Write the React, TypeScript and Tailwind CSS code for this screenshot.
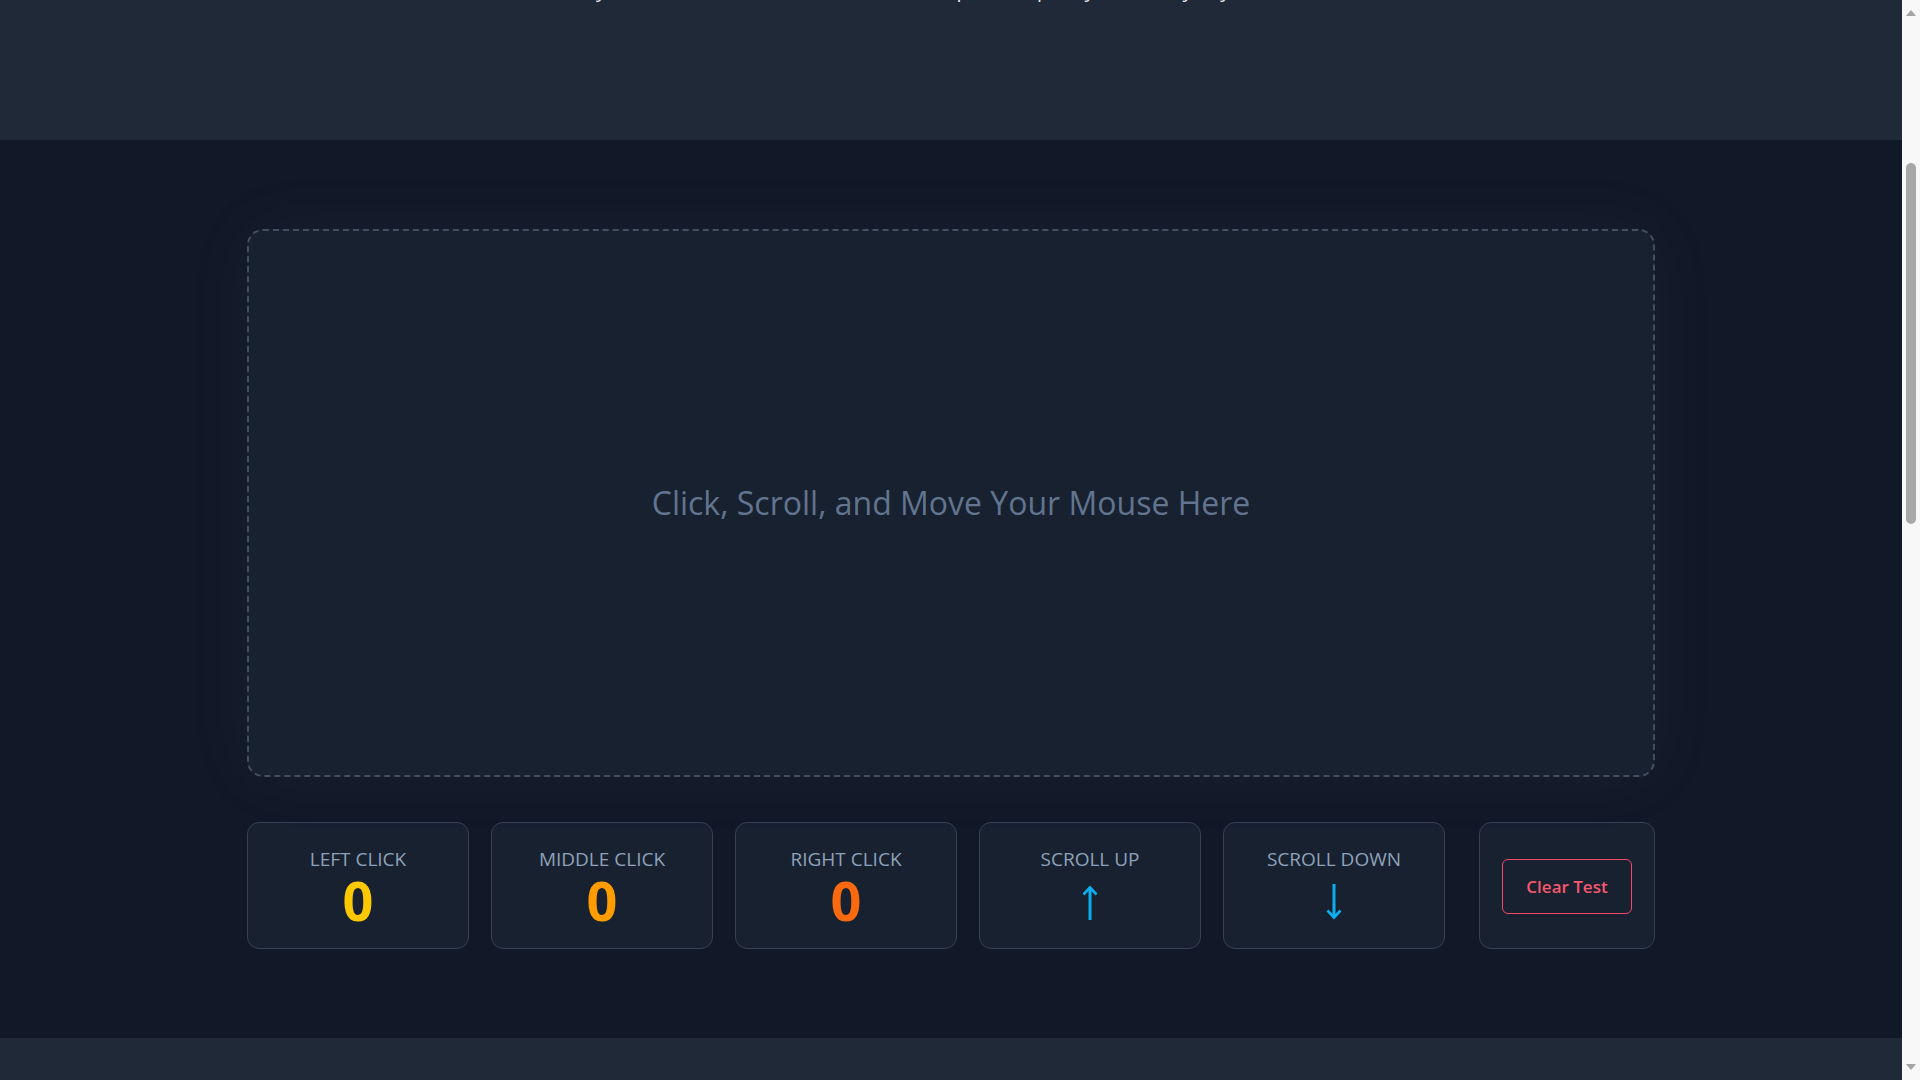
import React from "react";

function ArrowUp() {
  return (
    <svg width="16" height="35" viewBox="0 0 16 35" fill="none">
      <path d="M8 2.5 V35" stroke="#0aaff0" strokeWidth="3" />
      <path d="M1.5 9.5 L8 2.5 L14.5 9.5" stroke="#0aaff0" strokeWidth="2.6" />
    </svg>
  );
}

function ArrowDown() {
  return (
    <svg width="16" height="36" viewBox="0 0 16 36" fill="none">
      <path d="M8 0 V33.5" stroke="#0aaff0" strokeWidth="3" />
      <path d="M1.5 26.5 L8 33.5 L14.5 26.5" stroke="#0aaff0" strokeWidth="2.6" />
    </svg>
  );
}

function Stat({ label, children }: { label: string; children: React.ReactNode }) {
  return (
    <div className="flex h-[127px] w-[222px] shrink-0 flex-col items-center rounded-xl border border-gray-700 bg-gray-800/50 pt-[22px]">
      <div className="text-[19px] font-medium leading-[28px] text-slate-400">{label}</div>
      <div className="flex h-[54px] items-start justify-center">{children}</div>
    </div>
  );
}

function Num({ color }: { color: string }) {
  return <span className={`text-[54px] font-bold leading-[54px] ${color}`}>0</span>;
}

export default function App() {
  return (
    <div className="flex h-[1080px] w-[1920px] overflow-hidden bg-[#111827] font-['Open_Sans','Noto_Sans',sans-serif]">
      <div className="flex w-[1902px] shrink-0 flex-col">
        <header className="h-[140px] shrink-0 overflow-hidden bg-[#1f2937]">
          <p className="mt-[-24px] text-center text-[20px] leading-[28px] text-gray-200">
            Test your mouse buttons, scroll wheel, and pointer quickly and easily in your browser.
          </p>
        </header>
        <section className="h-[898px] shrink-0 pt-[89px]">
          <div className="mx-auto w-[1440px] px-4">
            <div className="flex h-[548px] items-center justify-center rounded-2xl border-2 border-dashed border-gray-600/90 bg-gray-800/50 shadow-[0_0_70px_rgba(148,163,184,0.06)]">
              <p className="text-[32px] text-slate-500">Click, Scroll, and Move Your Mouse Here</p>
            </div>
            <div className="mt-[45px] flex gap-[22px]">
              <Stat label="LEFT CLICK">
                <Num color="text-[#fcc800]" />
              </Stat>
              <Stat label="MIDDLE CLICK">
                <Num color="text-[#ff9d00]" />
              </Stat>
              <Stat label="RIGHT CLICK">
                <Num color="text-[#f96a10]" />
              </Stat>
              <Stat label="SCROLL UP">
                <div className="pt-[12px]">
                  <ArrowUp />
                </div>
              </Stat>
              <Stat label="SCROLL DOWN">
                <div className="pt-[11px]">
                  <ArrowDown />
                </div>
              </Stat>
              <div className="ml-[12px] flex h-[127px] flex-1 items-center justify-center rounded-xl border border-gray-700 bg-gray-800/50">
                <button className="mt-[2px] h-[55px] w-[130px] rounded-md border border-[#f04a66] text-[17px] font-semibold text-[#f7576f]">
                  Clear Test
                </button>
              </div>
            </div>
          </div>
        </section>
        <footer className="flex-1 bg-[#1f2937]" />
      </div>
      <div className="flex w-[18px] shrink-0 flex-col items-center bg-[#f8f8f8]">
        <svg className="mt-[10px]" width="10" height="6" viewBox="0 0 10 6">
          <path d="M5 0 L10 6 L0 6 Z" fill="#a3a3a3" />
        </svg>
        <div className="mt-[147px] h-[361px] w-[10px] rounded-full bg-[#a8a8a8]" />
        <div className="flex-1" />
        <svg className="mb-[10px]" width="10" height="6" viewBox="0 0 10 6">
          <path d="M0 0 L10 0 L5 6 Z" fill="#a3a3a3" />
        </svg>
      </div>
    </div>
  );
}
